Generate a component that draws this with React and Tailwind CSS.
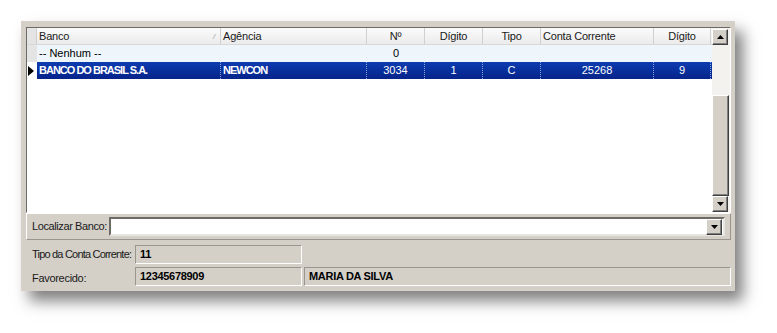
import { useState } from "react"

const colunas = [
  { titulo: "Banco", largura: "w-[184px]", alinhar: "text-left pl-[2px]", sort: true },
  { titulo: "Agência", largura: "w-[146px]", alinhar: "text-left pl-[2px]" },
  { titulo: "Nº", largura: "w-[58px]", alinhar: "text-center" },
  { titulo: "Dígito", largura: "w-[58px]", alinhar: "text-center" },
  { titulo: "Tipo", largura: "w-[58px]", alinhar: "text-center" },
  { titulo: "Conta Corrente", largura: "w-[113px]", alinhar: "text-left pl-[2px]" },
  { titulo: "Dígito", largura: "w-[57px]", alinhar: "text-center" },
]

const linhas = [
  ["-- Nenhum --", "", "0", "", "", "", ""],
  ["BANCO DO BRASIL S.A.", "NEWCON", "3034", "1", "C", "25268", "9"],
]

const alinharDados = ["text-left pl-[2px]", "text-left pl-[2px]", "text-center", "text-center", "text-center", "text-center", "text-center"]

function Seta({ baixo }) {
  return (
    <svg width="7" height="4" viewBox="0 0 7 4">
      {baixo ? <polygon points="0,0 7,0 3.5,4" fill="#000" /> : <polygon points="0,4 7,4 3.5,0" fill="#000" />}
    </svg>
  )
}

function Botao({ baixo }) {
  return (
    <div className="w-[16px] h-[16px] shrink-0 flex items-center justify-center bg-[#d4d0c8] border border-t-white border-l-white border-r-[#404040] border-b-[#404040] shadow-[inset_-1px_-1px_0_#808080]">
      <Seta baixo={baixo} />
    </div>
  )
}

function Campo({ largura, children }) {
  return (
    <div className={`${largura} h-[19px] shrink-0 flex items-center pl-[4px] bg-[#d4d0c8] border border-t-[#9a968f] border-l-[#9a968f] border-r-white border-b-white font-bold text-[11px] text-black tracking-[-0.3px]`}>
      {children}
    </div>
  )
}

export default function App() {
  const [selecionada] = useState(1)

  return (
    <div className="w-[777px] h-[333px] bg-white pl-[21px] pt-[21px] font-['Liberation_Sans',Arial,sans-serif] text-[11px] text-black">
      <div className="w-[714px] h-[270px] bg-[#d4d0c8] shadow-[8px_10px_14px_rgba(0,0,0,0.5)] pl-[5px] pt-[6px] pr-[4px] flex flex-col">
        {/* grade */}
        <div className="h-[186px] flex border border-t-[#6e6b66] border-l-[#6e6b66] border-r-white border-b-white bg-white">
          <div className="flex-1 flex flex-col">
            <div className="flex h-[17px] bg-gradient-to-b from-[#fbfbfb] to-[#ebebeb] border-b border-[#d8d8d8]">
              <div className="w-[10px] bg-[#e4e4e4] border-r border-[#cfcfcf]" />
              {colunas.map((c, i) => (
                <div key={i} className={`${c.largura} ${c.alinhar} relative leading-[17px] border-r border-[#d0d0d0] text-[#1a1a1a] tracking-[-0.2px]`}>
                  {c.titulo}
                  {c.sort && <span className="absolute right-[5px] top-0 text-[8px] text-[#999] italic">/</span>}
                </div>
              ))}
            </div>
            {linhas.map((linha, li) => {
              const sel = li === selecionada
              return (
                <div key={li} className={`flex h-[17px] ${sel ? "bg-gradient-to-b from-[#0d3cb0] to-[#06238a] text-white" : "bg-[#eef6fc]"}`}>
                  <div className={`w-[10px] flex items-center justify-start pl-[1px] ${sel ? "bg-white" : "bg-[#e4e4e4]"}`}>
                    {sel && (
                      <svg width="6" height="10" viewBox="0 0 6 10">
                        <polygon points="0,0 6,5 0,10" fill="#000" />
                      </svg>
                    )}
                  </div>
                  {linha.map((v, ci) => (
                    <div
                      key={ci}
                      className={`${colunas[ci].largura} ${alinharDados[ci]} leading-[17px] whitespace-nowrap overflow-hidden ${sel ? "border-r border-dotted border-[#8aa0d8]" : ""} ${sel && ci < 2 ? "font-bold tracking-[-1px]" : ""}`}
                    >
                      {v}
                    </div>
                  ))}
                </div>
              )
            })}
          </div>
          {/* barra de rolagem */}
          <div className="w-[18px] flex flex-col bg-[#f3f2ee] pt-[1px] pr-[1px]">
            <Botao />
            <div className="h-[50px]" />
            <div className="flex-1 bg-[#d4d0c8] border border-t-white border-l-white border-r-[#404040] border-b-[#404040] shadow-[inset_-1px_-1px_0_#808080]" />
            <Botao baixo />
          </div>
        </div>

        {/* localizar */}
        <div className="h-[27px] flex items-center border border-t-white border-l-white border-r-[#9a968f] border-b-[#9a968f] pl-[5px] pr-[5px]">
          <span className="w-[77px] shrink-0 whitespace-nowrap text-[#1a1a1a] tracking-[-0.4px]">Localizar Banco:</span>
          <div className="flex-1 h-[19px] bg-white flex justify-end items-center border-2 border-t-[#6e6b66] border-l-[#6e6b66] border-r-[#e8e6e0] border-b-[#e8e6e0] pr-[1px]">
            <Botao baixo />
          </div>
        </div>

        {/* dados */}
        <div className="flex flex-col gap-[2px] pt-[5px] pl-[6px]">
          <div className="flex items-center">
            <span className="w-[103px] shrink-0 text-[#1a1a1a] whitespace-nowrap tracking-[-0.8px]">Tipo da Conta Corrente:</span>
            <Campo largura="w-[167px]">11</Campo>
          </div>
          <div className="flex items-center">
            <span className="w-[103px] shrink-0 text-[#1a1a1a] pt-[4px] tracking-[-0.3px]">Favorecido:</span>
            <Campo largura="w-[167px]">12345678909</Campo>
            <div className="ml-[2px] flex-1">
              <Campo largura="w-full">MARIA DA SILVA</Campo>
            </div>
          </div>
        </div>
      </div>
    </div>
  )
}
